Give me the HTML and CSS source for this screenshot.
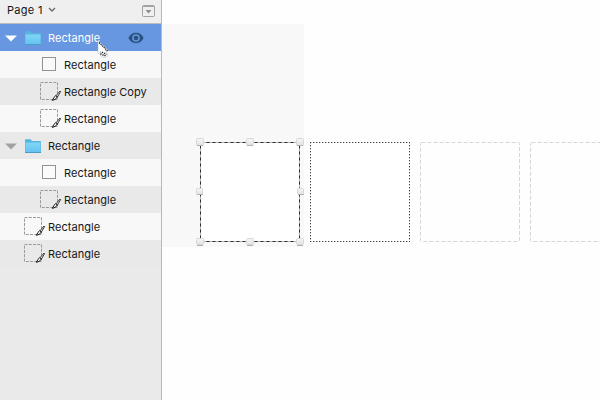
FILE: index.html
```
<!DOCTYPE html>
<html lang="en">
<head>
<meta charset="utf-8">
<title>Layers</title>
<link rel="stylesheet" href="styles.css">
</head>
<body>
<svg width="0" height="0" class="defs">
  <defs>
    <linearGradient id="fold" x1="0" y1="0" x2="0" y2="1"><stop offset="0" stop-color="#82d6f6"/><stop offset="1" stop-color="#65c3f0"/></linearGradient>
    <linearGradient id="knob" x1="0" y1="0" x2="0" y2="1"><stop offset="0" stop-color="#f6f6f6"/><stop offset="1" stop-color="#e2e2e2"/></linearGradient>
    <symbol id="folder" viewBox="0 0 16 15"><path d="M0 1.2Q0 .3 1 .3H5.6L7 2H15Q16 2 16 3V13.5H0Z" fill="#55b5df"/><path d="M.5 3.5H15.5V13H.5Z" fill="url(#fold)"/><path d="M0 13.5H16" stroke="#4a9dc4"/></symbol>
    <symbol id="slice" viewBox="0 0 22 20"><rect x=".5" y=".5" width="17" height="17" fill="none" stroke="#9a9a9a" stroke-dasharray="3 1.25"/><path d="M12.4 18.4Q13.8 14.8 15.8 13.6L17.3 15Q16.2 17.7 12.4 18.4Z" fill="#fff" stroke="#111" stroke-width="1"/><path d="M16 13.8L20 9L20.6 9.6L17.4 15Z" fill="#eee" stroke="#111" stroke-width=".8"/></symbol>
    <symbol id="arrow" viewBox="0 0 12 7"><path d="M0 .5H12L6 6.5Z" fill="currentColor"/></symbol>
  </defs>
</svg>
<div class="app">
  <aside class="sidebar">
    <header class="page-bar">
      <span>Page 1</span>
      <svg class="chevron" width="8" height="6" viewBox="0 0 8 6"><path d="M1 1L4 4L7 1" fill="none" stroke="#666" stroke-width="1.3"/></svg>
      <svg class="collapse" width="13" height="12" viewBox="0 0 13 12"><rect x=".5" y=".5" width="12" height="11" rx="1" fill="none" stroke="#a3a3a3"/><path d="M1 1.5H12" stroke="#a3a3a3"/><path d="M3.5 5H9.5L6.5 8.6Z" fill="#8e8e8e"/></svg>
    </header>
    <ul class="layers">
      <li class="row group selected"><svg class="arrow"><use href="#arrow"/></svg><svg class="folder"><use href="#folder"/></svg><span class="name">Rectangle</span>
        <svg class="eye" width="16" height="12" viewBox="0 0 16 12"><path d="M.3 6Q3 .8 8 .8T15.7 6Q13 11.2 8 11.2T.3 6Z" fill="#2b527f"/><circle cx="8" cy="6" r="3.8" fill="#6797e0"/><circle cx="8" cy="6" r="2.3" fill="#2b527f"/></svg></li>
      <li class="row child light"><i class="shape"></i><span class="name">Rectangle</span></li>
      <li class="row child"><svg class="slice"><use href="#slice"/></svg><span class="name">Rectangle Copy</span></li>
      <li class="row child light"><svg class="slice"><use href="#slice"/></svg><span class="name">Rectangle</span></li>
      <li class="row group"><svg class="arrow"><use href="#arrow"/></svg><svg class="folder"><use href="#folder"/></svg><span class="name">Rectangle</span></li>
      <li class="row child light"><i class="shape"></i><span class="name">Rectangle</span></li>
      <li class="row child"><svg class="slice"><use href="#slice"/></svg><span class="name">Rectangle</span></li>
      <li class="row top light"><svg class="slice"><use href="#slice"/></svg><span class="name">Rectangle</span></li>
      <li class="row top"><svg class="slice"><use href="#slice"/></svg><span class="name">Rectangle</span></li>
    </ul>
  </aside>
  <main class="canvas">
    <div class="artboard"></div>
    <svg class="drawing" width="438" height="400" viewBox="162 0 438 400" fill="none">
      <rect x="200.5" y="142.5" width="99" height="99" fill="#fff" stroke="#b5b5b5"/>
      <rect x="200.5" y="142.5" width="99" height="99" stroke="#2c2c2c" stroke-dasharray="3 3"/>
      <rect x="310.5" y="142.5" width="99" height="99" fill="#fff"/>
      <path d="M310 142.5H410M310 241.5H410M310.5 142V242M409.5 142V242" stroke="#3c3c3c" stroke-dasharray="1 2"/>
      <path d="M311 142.5H410M311 241.5H410M310.5 143V242M409.5 143V242" stroke="#c4c4c4" stroke-dasharray="1 2"/>
      <rect x="420.5" y="142.5" width="99" height="99" rx="1" stroke="#d6d6d6" stroke-dasharray="4 2"/>
      <rect x="530.5" y="142.5" width="99" height="99" rx="1" stroke="#d6d6d6" stroke-dasharray="4 2"/>
      <g fill="url(#knob)" stroke="#d8d8d8">
        <rect x="196.5" y="138.5" width="7" height="7" rx="1"/><rect x="246.5" y="138.5" width="7" height="7" rx="1"/><rect x="296.5" y="138.5" width="7" height="7" rx="1"/>
        <rect x="196.5" y="188.5" width="6" height="6" rx="1"/><rect x="297.5" y="188.5" width="6" height="6" rx="1"/>
        <rect x="196.5" y="238.5" width="7" height="6" rx="1"/><rect x="246.5" y="238.5" width="7" height="6" rx="1"/><rect x="296.5" y="238.5" width="7" height="6" rx="1"/>
      </g>
      <path d="M197 145.5h6M247 145.5h6M297 145.5h6M197 194.5h6M298 194.5h6M197 245.5h6M247 245.5h6M297 245.5h6" stroke="#b2b2b2"/>
    </svg>
  </main>
</div>
<svg class="cursor" width="14" height="20" viewBox="0 0 14 20"><path d="M1 .5V13.5L4 11L3 15L5.5 17L8.5 17.5L11 15.5L8.5 10.5H11.5Z" fill="#fff" stroke="#a5adba" stroke-width=".5"/><path d="M2 2.500L10.500 11M3.500 14.500L6.500 11.500M5.500 15.500L8.500 12.500M7.500 16L9.500 14" fill="none" stroke="#111" stroke-width="1.1" stroke-dasharray="1.4 .8"/></svg>
</body>
</html>
```
FILE: styles.css
```
body { margin: 0; overflow: hidden; font: 11px/27px Inter, sans-serif; letter-spacing: 0.04px; color: #161616; }
.defs { position: absolute; }
.app { display: flex; width: 600px; height: 400px; }
.sidebar { box-sizing: border-box; width: 162px; background: #eaeaea; border-right: 1px solid #b8b8b8; }
.page-bar { box-sizing: border-box; display: flex; align-items: center; height: 24px; padding: 0 6px 3px 7px; background: #efefef; border-bottom: 1px solid #bcbcbc; line-height: 20px; letter-spacing: 0.3px; }
.chevron { margin-left: 5px; }
.collapse { margin: 2px 0 0 auto; }
.layers { margin: 0; padding: 0; list-style: none; }
.row { box-sizing: border-box; display: flex; align-items: center; height: 27px; white-space: nowrap; background: #e9e9e9; }
.light { background: #f8f8f8; }
.selected { background: #6797e0; color: #fff; }
.group { padding-left: 5px; }
.child { padding-left: 40px; }
.top { padding-left: 24px; }
.name { padding-top: 2px; }
.arrow { width: 12px; height: 7px; margin-top: 1px; color: #a2a2a2; }
.selected .arrow { color: #fff; }
.folder { width: 16px; height: 15px; margin: 1px 7px 0 8px; }
.eye { margin: 0 17px 0 auto; }
.shape { box-sizing: border-box; width: 14px; height: 14px; margin: 0 8px 1px 2px; border: 1px solid #929292; background: #fafafa; }
.slice { width: 22px; height: 20px; margin: 1px 2px 0 0; }
.canvas { position: relative; flex: 1; background: #fefefe; overflow: hidden; }
.artboard { position: absolute; left: 0; top: 24px; width: 142px; height: 223px; background: #f8f8f8; }
.drawing { position: absolute; left: 0; top: 0; }
.cursor { position: absolute; left: 97px; top: 40px; }
```
